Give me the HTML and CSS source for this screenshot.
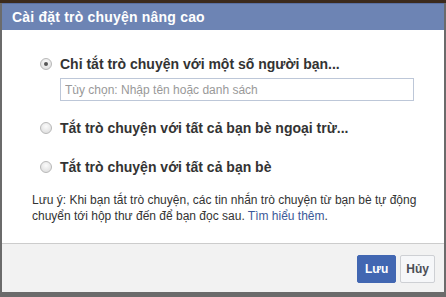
FILE: index.html
```html
<!DOCTYPE html>
<html lang="vi">

<head>
    <meta charset="UTF-8" />
    <meta name="viewport" content="width=device-width, initial-scale=1.0" />
    <title>Cài đặt trò chuyện nâng cao</title>
    <link rel="stylesheet" href="styles.css">
</head>

<body>

    <div class="dialog">
        <div class="dialog-header">Cài đặt trò chuyện nâng cao</div>

        <div class="dialog-body">
            <label class="option option-first">
                <input type="radio" name="chat" class="radio" checked>
                <span>Chỉ tắt trò chuyện với một số người bạn...</span>
            </label>
            <input type="text" class="friends-input" placeholder="Tùy chọn: Nhập tên hoặc danh sách">

            <label class="option option-second">
                <input type="radio" name="chat" class="radio">
                <span>Tắt trò chuyện với tất cả bạn bè ngoại trừ...</span>
            </label>

            <label class="option option-third">
                <input type="radio" name="chat" class="radio">
                <span>Tắt trò chuyện với tất cả bạn bè</span>
            </label>

            <p class="note">Lưu ý: Khi bạn tắt trò chuyện, các tin nhắn trò chuyện từ bạn bè tự động<br>chuyển tới hộp thư đến để bạn đọc sau. <a href="#">Tìm hiểu thêm</a>.</p>
        </div>

        <div class="dialog-footer">
            <button class="btn btn-primary">Lưu</button>
            <button class="btn">Hủy</button>
        </div>
    </div>

</body>

</html>
```

FILE: styles.css
```css
body {
    margin: 0;
    padding: 3px 2px 0;
    height: 297px;
    box-sizing: border-box;
    overflow: hidden;
    font-family: 'Liberation Sans', Arial, sans-serif;
    background: linear-gradient(#3b2a1c 0, #3b2a1c 3px, #6b6b6b 3px);
}

.dialog {
    width: 442px;
    background: #fff;
}

.dialog-header {
    height: 27px;
    line-height: 27px;
    padding-left: 10px;
    background-color: #6d84b4;
    border-top: 1px solid #5a6fa0;
    box-sizing: border-box;
    color: #fff;
    font-size: 14px;
    font-weight: bold;
    letter-spacing: 0.2px;
}

.dialog-body {
    height: 213px;
    padding: 25px 14px 0 30px;
    box-sizing: border-box;
}

.option {
    display: flex;
    align-items: center;
    gap: 8px;
    height: 18px;
    padding-left: 8px;
    font-size: 14px;
    font-weight: bold;
    color: #333;
    cursor: pointer;
}

.option-second {
    margin-top: 18px;
}

.option-third {
    margin-top: 21px;
}

.radio {
    appearance: none;
    margin: 0;
    width: 12px;
    height: 12px;
    border-radius: 50%;
    border: 1px solid #b8b8b8;
    background: radial-gradient(circle at 50% 35%, #fbfbfb, #d9d9d9);
    box-sizing: border-box;
    position: relative;
}

.radio:checked::after {
    content: "";
    position: absolute;
    top: 3px;
    left: 3px;
    width: 4px;
    height: 4px;
    border-radius: 50%;
    background: #555;
}

.friends-input {
    display: block;
    margin: 5px 0 0 28px;
    width: 354px;
    height: 23px;
    padding: 0 4px;
    box-sizing: border-box;
    border: 1px solid #bdc7d8;
    font-family: inherit;
    font-size: 12px;
    color: #333;
}

.friends-input::placeholder {
    color: #999;
}

.note {
    margin: 16px 0 0;
    font-size: 12px;
    line-height: 16px;
    color: #333;
    white-space: nowrap;
}

.note a {
    color: #3b5998;
    text-decoration: none;
}

.dialog-footer {
    display: flex;
    justify-content: flex-end;
    gap: 4px;
    height: 49px;
    padding: 11px 9px 0 0;
    box-sizing: border-box;
    border-top: 1px solid #ccc;
    background: #f2f2f2;
}

.btn {
    height: 28px;
    padding: 0 5px;
    border: 1px solid #ced0d4;
    border-radius: 2px;
    background: #f6f7f9;
    color: #4b4f56;
    font-family: inherit;
    font-size: 12px;
    font-weight: bold;
}

.btn-primary {
    padding: 0 7px;
    border-color: #4267b2;
    background: #4267b2;
    color: #fff;
}
```
